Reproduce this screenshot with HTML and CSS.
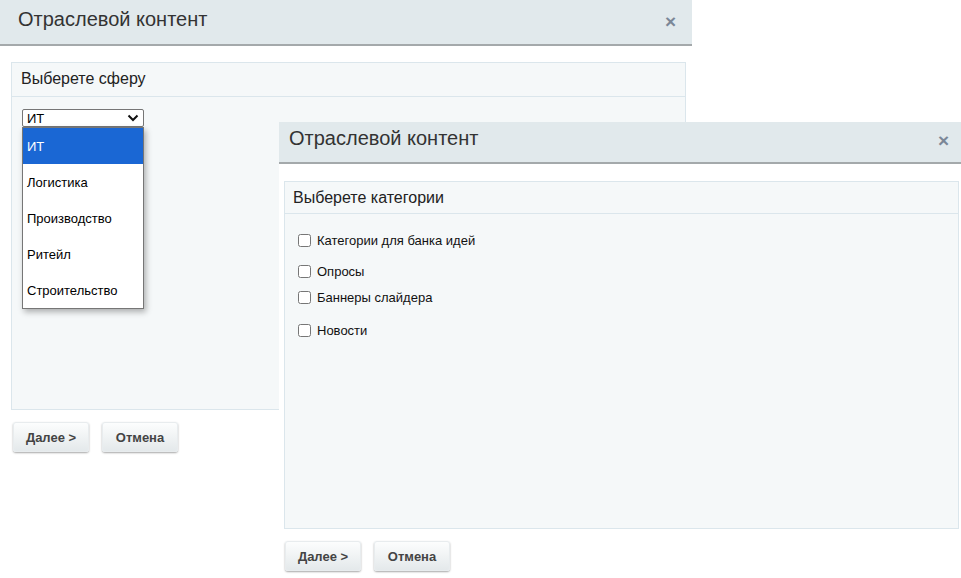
FILE: index.html
```html
<!DOCTYPE html>
<html lang="ru">
<head>
    <meta charset="UTF-8">
    <title>Отраслевой контент</title>
    <link rel="stylesheet" href="styles.css">
</head>
<body>
    <div class="dialog dialog-sphere">
        <div class="dialog-head">
            <span class="dialog-title">Отраслевой контент</span>
            <span class="dialog-close">&times;</span>
        </div>
        <div class="dialog-body">
            <div class="panel">
                <div class="panel-head">Выберете сферу</div>
                <div class="panel-content">
                    <div class="select">
                        <div class="select-box">
                            <span>ИТ</span>
                            <svg width="12" height="8" viewBox="0 0 12 8"><path d="M1.5 1.5 L6 6 L10.5 1.5" fill="none" stroke="#111" stroke-width="2"/></svg>
                        </div>
                        <ul class="select-list">
                            <li class="selected">ИТ</li>
                            <li>Логистика</li>
                            <li>Производство</li>
                            <li>Ритейл</li>
                            <li>Строительство</li>
                        </ul>
                    </div>
                </div>
            </div>
            <div class="buttons">
                <button class="btn">Далее &gt;</button>
                <button class="btn">Отмена</button>
            </div>
        </div>
    </div>

    <div class="dialog dialog-category">
        <div class="dialog-head">
            <span class="dialog-title">Отраслевой контент</span>
            <span class="dialog-close">&times;</span>
        </div>
        <div class="dialog-body">
            <div class="panel">
                <div class="panel-head">Выберете категории</div>
                <div class="panel-content checks">
                    <label class="check c1"><input type="checkbox"> Категории для банка идей</label>
                    <label class="check c2"><input type="checkbox"> Опросы</label>
                    <label class="check c3"><input type="checkbox"> Баннеры слайдера</label>
                    <label class="check c4"><input type="checkbox"> Новости</label>
                </div>
            </div>
            <div class="buttons">
                <button class="btn">Далее &gt;</button>
                <button class="btn">Отмена</button>
            </div>
        </div>
    </div>
</body>
</html>
```

FILE: styles.css
```css
body {
    margin: 0;
    width: 961px;
    height: 578px;
    overflow: hidden;
    position: relative;
    background: #fff;
    font-family: "Liberation Sans", Arial, sans-serif;
    color: #222;
}
.dialog {
    position: absolute;
    background: #fff;
}
.dialog-sphere {
    left: 0;
    top: 0;
    width: 692px;
}
.dialog-category {
    left: 279px;
    top: 122px;
    width: 685px;
}
.dialog-head {
    box-sizing: border-box;
    display: flex;
    align-items: center;
    justify-content: space-between;
    background: #e1e9ec;
    border-bottom: 2px solid #a4a9ab;
    padding: 0 16px 6px 18px;
}
.dialog-sphere .dialog-head {
    height: 46px;
}
.dialog-category .dialog-head {
    height: 42px;
    padding-left: 10px;
    padding-right: 15px;
    padding-bottom: 7px;
}
.dialog-title {
    font-size: 20px;
    color: #333;
}
.dialog-close {
    font-size: 19px;
    color: #7b8797;
    font-weight: bold;
    margin-top: 5px;
}
.dialog-body {
    padding: 16px 6px 0 11px;
}
.dialog-category .dialog-body {
    padding: 17px 5px 0 5px;
}
.panel {
    height: 346px;
    border: 1px solid #dbe6ec;
    background: #f5f8f9;
}
.panel-head {
    height: 33px;
    line-height: 32px;
    padding-left: 9px;
    font-size: 16px;
    color: #222;
    border-bottom: 1px solid #dbe6ec;
}
.dialog-category .panel-head {
    height: 31px;
    line-height: 31px;
    padding-left: 8px;
}
.panel-content {
    padding: 12px 10px;
}
.select {
    position: relative;
    width: 122px;
}
.select-box {
    height: 16px;
    border: 1px solid #767676;
    border-radius: 2px;
    background: #fff;
    display: flex;
    align-items: center;
    justify-content: space-between;
    padding: 0 4px 0 4px;
    font-size: 13px;
    color: #000;
}
.select-list {
    position: absolute;
    left: 0;
    top: 18px;
    width: 120px;
    margin: 0;
    padding: 0;
    list-style: none;
    background: #fff;
    border: 1px solid #767676;
    box-shadow: 2px 3px 6px rgba(0, 0, 0, 0.3);
}
.select-list li {
    height: 36px;
    line-height: 37px;
    padding-left: 4px;
    font-size: 13px;
    color: #000;
}
.select-list li.selected {
    background: #1a67d4;
    color: #fff;
}
.checks {
    padding: 16px 13px;
    display: flex;
    flex-direction: column;
    align-items: flex-start;
}
.check {
    display: flex;
    align-items: center;
    font-size: 13px;
    color: #111;
    height: 20px;
}
.check input {
    margin: 0 6px 0 0;
    width: 13px;
    height: 13px;
}
.c2 { margin-top: 11px; }
.c3 { margin-top: 6px; }
.c4 { margin-top: 13px; }
.buttons {
    display: flex;
    gap: 13px;
    padding: 12px 0 0 2px;
}
.dialog-category .buttons {
    padding-left: 1px;
}
.btn {
    width: 76px;
    height: 30px;
    border: none;
    border-radius: 3px;
    background: linear-gradient(#fdfefe, #e3e8ea);
    box-shadow: 0 1px 2px rgba(0, 0, 0, 0.35), inset 0 0 0 1px #e8ecee;
    font-family: "Liberation Sans", Arial, sans-serif;
    font-size: 13px;
    font-weight: bold;
    color: #444;
}
```
